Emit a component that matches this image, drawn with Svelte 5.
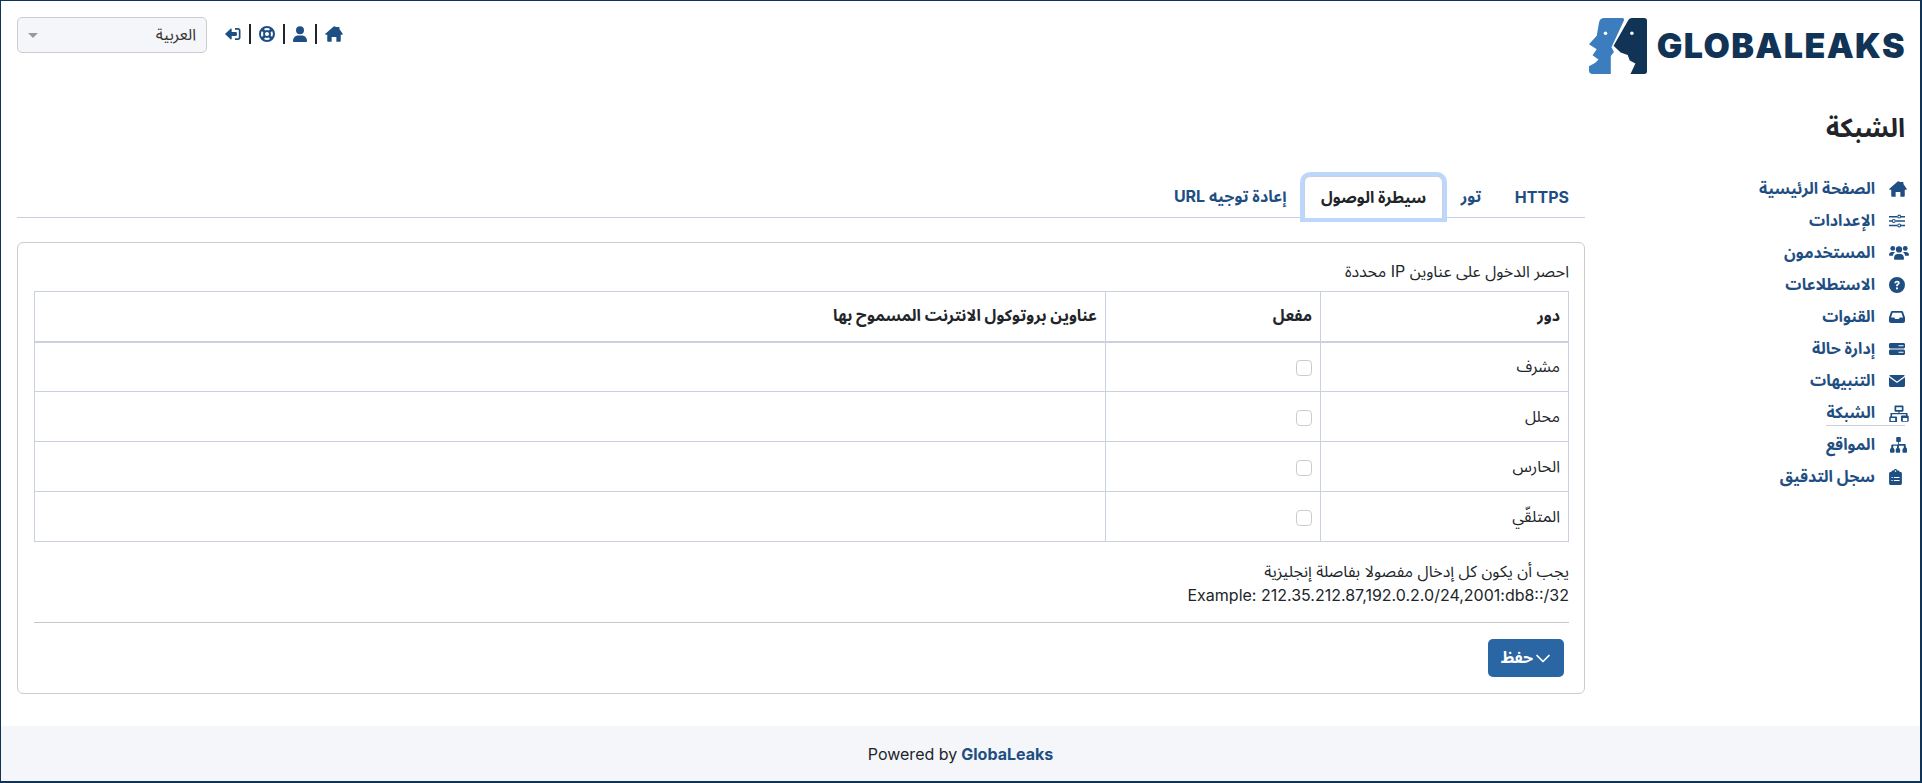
<script>
  const items = [
    { label: "الصفحة الرئيسية", icon: "home" },
    { label: "الإعدادات", icon: "sliders" },
    { label: "المستخدمون", icon: "users" },
    { label: "الاستطلاعات", icon: "question" },
    { label: "القنوات", icon: "inbox" },
    { label: "إدارة حالة", icon: "server" },
    { label: "التنبيهات", icon: "mail" },
    { label: "الشبكة", icon: "network", active: true },
    { label: "المواقع", icon: "sitemap" },
    { label: "سجل التدقيق", icon: "clipboard" }
  ];
  const tabs = ["HTTPS", "تور", "سيطرة الوصول", "إعادة توجيه URL"];
  const roles = ["مشرف", "محلل", "الحارس", "المتلقّي"];
  const activeTab = 2;

  // drawn size and crop of every icon
  const sizes = {
    home: [18, 16, "0 1 16 14.200"],
    sliders: [16, 16, "0 0 16 16"],
    users: [20, 17, "0 1.500 16 13.600"],
    question: [16, 16, "0 0 16 16"],
    inbox: [16, 16, "0 1 16 14"],
    server: [16, 16, "0 1 16 14"],
    mail: [16, 16, "0 1 16 14"],
    network: [20, 17, "0 0 16 14"],
    sitemap: [18, 16, "0 1 16 14.200"],
    clipboard: [13, 16, "1.600 0 12.800 16"]
  };
</script>

{#snippet icon(name)}
  <svg class="ico" width={sizes[name][0]} height={sizes[name][1]} viewBox={sizes[name][2]} fill="currentColor" aria-hidden="true">
    {#if name === "home"}
      <path d="M8 1.200 0.300 7.900c-.3.300-.1.800.3.800H2v5.600c0 .4.300.7.700.7h3.200v-4.200h4.200V15h3.200c.4 0 .7-.3.700-.7V8.700h1.400c.4 0 .6-.5.300-.8L12.800 3.700V1.800h-2v.2z"/>
    {:else if name === "sliders"}
      <path d="M0 2.900h8.400v1.500H0zM12 2.900h4v1.500h-4zM0 7.300h3v1.500H0zM6.600 7.300H16v1.500H6.600zM0 11.700h8.400v1.500H0zM12 11.700h4v1.500h-4z"/>
      <path fill-rule="evenodd" d="M10.200 1.600a2 2 0 1 1 0 4 2 2 0 0 1 0-4zm0 1.100a.9.900 0 1 0 0 1.800.9.900 0 0 0 0-1.800zM4.800 6a2 2 0 1 1 0 4 2 2 0 0 1 0-4zm0 1.100a.9.900 0 1 0 0 1.800.9.900 0 0 0 0-1.800zM10.200 10.400a2 2 0 1 1 0 4 2 2 0 0 1 0-4zm0 1.100a.9.900 0 1 0 0 1.800.9.900 0 0 0 0-1.800z"/>
    {:else if name === "users"}
      <circle cx="3" cy="4.200" r="1.900"/><circle cx="13" cy="4.200" r="1.900"/><circle cx="8" cy="5" r="2.500"/>
      <path d="M0 9.500C0 7.900 1 7 2.400 7h1.200c.4 0 .8.100 1.100.3C3.800 8 3.200 9 3.100 10H.5c-.3 0-.5-.2-.5-.5zM16 9.500C16 7.900 15 7 13.600 7h-1.200c-.4 0-.8.100-1.100.3.900.7 1.500 1.700 1.600 2.700h2.600c.3 0 .5-.2.500-.5zM4 12.500C4 10 5.200 8.600 6.800 8.600h2.400c1.600 0 2.800 1.400 2.800 3.900 0 .5-.3.800-.8.800H4.800c-.5 0-.8-.3-.8-.8z"/>
    {:else if name === "question"}
      <path fill-rule="evenodd" d="M8 0a8 8 0 1 1 0 16A8 8 0 0 1 8 0zM5.400 6.200h1.700c0-.6.400-1 .9-1s.9.300.9.800c0 .4-.3.700-.8 1-.7.500-1 .9-1 1.800v.4h1.700v-.3c0-.5.200-.7.800-1.100.7-.5 1.100-1.100 1.100-1.900C10.700 4.500 9.600 3.700 8 3.700c-1.500 0-2.600.9-2.600 2.500zM8 10.300a1.100 1.100 0 1 0 0 2.200 1.100 1.100 0 0 0 0-2.200z"/>
    {:else if name === "inbox"}
      <path fill-rule="evenodd" d="M3.200 2h9.600c.6 0 1.100.3 1.300.9L16 8.600V12c0 1.100-.9 2-2 2H2c-1.100 0-2-.9-2-2V8.600L1.900 2.900C2.100 2.300 2.600 2 3.200 2zm.4 1.700L2 8.500h3.200l1 1.600h3.600l1-1.600H14l-1.600-4.800z"/>
    {:else if name === "server"}
      <path fill-rule="evenodd" d="M1.500 2h13c.8 0 1.500.7 1.500 1.500v2.400c0 .8-.7 1.500-1.500 1.500h-13C.7 7.400 0 6.700 0 5.900V3.500C0 2.700.7 2 1.500 2zm8 2.200v1h5v-1zM1.500 8.600h13c.8 0 1.500.7 1.500 1.500v2.400c0 .8-.7 1.500-1.500 1.500h-13c-.8 0-1.500-.7-1.500-1.500v-2.400c0-.8.700-1.500 1.500-1.500zm8 2.200v1h5v-1z"/>
    {:else if name === "mail"}
      <path d="M1.500 2h13c.6 0 1 .3 1.300.7L8 8.400.2 2.700C.5 2.300.9 2 1.500 2zM0 4.200l7.700 5.600c.2.100.4.100.6 0L16 4.200v8.300c0 .8-.7 1.500-1.500 1.500h-13C.7 14 0 13.300 0 12.500z"/>
    {:else if name === "network"}
      <path fill-rule="evenodd" d="M5 .5h6c.4 0 .7.300.7.700v3.600c0 .4-.3.700-.7.700H8.500v1h6.500v2.200h.3c.4 0 .7.300.7.700v3.600c0 .4-.3.700-.7.700h-5c-.4 0-.7-.3-.7-.7v-3.600c0-.4.300-.7.700-.7h3.400V7.700h-11.400v1.800h3.400c.4 0 .7.300.7.700v3.600c0 .4-.3.700-.7.700h-5c-.4 0-.7-.3-.7-.7v-3.600c0-.4.300-.7.700-.7h.3V6.500h6.500v-1H5c-.4 0-.7-.3-.7-.7V1.200c0-.4.300-.7.700-.7zm.7 1.300v2.400h4.600V1.800zM1.200 10.800v2.400h3.600v-2.400zm10 0v2.400h3.600v-2.400z"/>
    {:else if name === "sitemap"}
      <path d="M6.200 1h3.600c.4 0 .7.300.7.700v3c0 .4-.3.700-.7.700h-1v1.700h5c.6 0 1.100.5 1.100 1.100v2c.7.300 1.100.9 1.100 1.800V14c0 .5-.4 1-1 1h-2c-.6 0-1-.5-1-1v-1.500c0-.9.400-1.500 1.100-1.800v-2H8.800v2c.7.300 1.100.9 1.100 1.800V14c0 .5-.4 1-1 1H7c-.6 0-1-.5-1-1v-1.500c0-.9.400-1.500 1.100-1.800v-2H3.800v2c.7.300 1.100.9 1.100 1.800V14c0 .5-.4 1-1 1h-2c-.6 0-1-.5-1-1v-1.500c0-.9.400-1.500 1.100-1.800v-2c0-.6.500-1.100 1.100-1.100h5V5.400h-1c-.4 0-.7-.3-.7-.7v-3c0-.4.300-.7.700-.7z"/>
    {:else if name === "clipboard"}
      <path fill-rule="evenodd" d="M8 0c.9 0 1.600.6 1.900 1.400H11c.5 0 1 .4 1 1V3h1c.8 0 1.400.6 1.400 1.400v10.200c0 .8-.6 1.400-1.400 1.400H3c-.8 0-1.400-.6-1.400-1.400V4.400C1.600 3.600 2.200 3 3 3h1v-.6c0-.6.500-1 1-1h1.100C6.400.600 7.100 0 8 0zm0 1.300a.8.800 0 1 0 0 1.600.8.800 0 0 0 0-1.600zM4 8v1h1.200V8zm2.400 0v1h5.600V8zM4 11v1h1.200v-1zm2.400 0v1h5.600v-1z"/>
    {/if}
  </svg>
{/snippet}

<div class="page" dir="rtl">
  <div class="content">
    <header>
      <div class="logo" dir="ltr">
        <svg viewBox="18 18 165 165" width="58" height="56" preserveAspectRatio="none" aria-hidden="true">
          <path fill="#3b7dbf" d="M62 18H112Q120 18 117 26L82 104 89 118 80 130V183H28Q18 183 18 173V160L36 150 45 140 28 128 40 110 18 95 40 70 46 34Q48 18 62 18Z"/>
          <path fill="#113355" d="M130 24Q133 18 140 18H175Q183 18 183 26V175Q183 183 175 183H136L150 152 134 143 128 127 108 120 88 100Z"/>
          <circle cx="65" cy="63" r="5" fill="#fff"/>
          <circle cx="140" cy="63" r="5" fill="#fff"/>
        </svg>
        <span>GLOBALEAKS</span>
      </div>
      <div class="tools">
        <nav class="links">
          <a href="#home">{@render icon("home")}</a>
          <i></i>
          <a href="#me">
            <svg class="ico" width="14" height="16" viewBox="1 0 14 16" fill="currentColor"><circle cx="8" cy="4.200" r="4"/><path d="M2 16c-.6 0-1-.4-1-1 0-3.300 2.500-5.400 5-5.400h4c2.500 0 5 2.100 5 5.400 0 .6-.4 1-1 1z"/></svg>
          </a>
          <i></i>
          <a href="#help">
            <svg class="ico" width="16" height="16" viewBox="0 0 16 16" fill="currentColor"><path fill-rule="evenodd" d="M8 0a8 8 0 1 1 0 16A8 8 0 0 1 8 0zm0 2a6 6 0 0 0-3.100.9l1.500 1.500a3.900 3.900 0 0 1 3.200 0l1.500-1.500A6 6 0 0 0 8 2zM2.900 4.900a6 6 0 0 0 0 6.200l1.500-1.500a3.900 3.900 0 0 1 0-3.200zm10.200 0-1.500 1.500a3.900 3.900 0 0 1 0 3.200l1.500 1.500a6 6 0 0 0 0-6.200zM8 6a2 2 0 1 0 0 4 2 2 0 0 0 0-4zm-1.600 5.600-1.500 1.500a6 6 0 0 0 6.200 0l-1.500-1.500a3.900 3.900 0 0 1-3.200 0z"/></svg>
          </a>
          <i></i>
          <a href="#out">
            <svg class="ico" width="16" height="16" viewBox="0 0 16 16" fill="currentColor"><path d="M10 2h3c1.500 0 2.500 1 2.500 2.500v7c0 1.500-1 2.500-2.500 2.500h-3v-1.700h3c.5 0 .8-.3.800-.8v-7c0-.5-.3-.8-.8-.8h-3z"/><path d="M0 8l5.500-5.200c.5-.5 1.200-.1 1.200.5V6h4.300c.5 0 .9.400.9.900v2.200c0 .5-.4.900-.9.900H6.700v2.700c0 .6-.7 1-1.200.5z"/></svg>
          </a>
        </nav>
        <div class="lang"><span>العربية</span><b></b></div>
      </div>
    </header>

    <div class="body">
      <aside>
        <h1>الشبكة</h1>
        <ul>
          {#each items as it}
            <li class:active={it.active}>
              <span class="slot" dir="ltr">{@render icon(it.icon)}</span>
              <a href="#x">{it.label}</a>
            </li>
          {/each}
        </ul>
      </aside>

      <main>
        <div class="tabs">
          {#each tabs as t, i}
            <button class:on={i === activeTab}>{t}</button>
          {/each}
        </div>
        <section class="card">
          <p class="lead">احصر الدخول على عناوين IP محددة</p>
          <table>
            <thead>
              <tr>
                <th class="c1">دور</th>
                <th class="c2">مفعل</th>
                <th>عناوين بروتوكول الانترنت المسموح بها</th>
              </tr>
            </thead>
            <tbody>
              {#each roles as r}
                <tr>
                  <td>{r}</td>
                  <td><span class="check"></span></td>
                  <td></td>
                </tr>
              {/each}
            </tbody>
          </table>
          <div class="help">
            <div>يجب أن يكون كل إدخال مفصولا بفاصلة إنجليزية</div>
            <div>Example: 212.35.212.87,192.0.2.0/24,2001:db8::/32</div>
          </div>
          <hr />
          <div class="actions">
            <button class="save">
              <svg viewBox="0 0 16 16" width="16" height="16" fill="none" stroke="#fff" stroke-width="1.700" stroke-linecap="round" stroke-linejoin="round"><path d="M2 5.500 8 11.500l6-6"/></svg>
              <span>حفظ</span>
            </button>
          </div>
        </section>
      </main>
    </div>
  </div>

  <footer dir="ltr">Powered by <a href="#gl">GlobaLeaks</a></footer>
</div>

<style>
  :global(body) {
    margin: 0;
    background: #fff;
  }

  .page {
    box-sizing: border-box;
    height: 783px;
    border-style: solid;
    border-color: #113355;
    border-width: 1px 2px 2px 1px;
    display: flex;
    flex-direction: column;
    font-family: Inter, "Noto Sans Arabic", "Noto Sans", "DejaVu Sans", sans-serif;
    font-size: 16px;
    color: #212529;
    overflow: hidden;
  }

  .content {
    flex: 1;
    padding: 16px 15px 0 16px;
  }

  header {
    display: flex;
    justify-content: space-between;
    align-items: flex-start;
    height: 64px;
  }

  .logo {
    display: flex;
    align-items: center;
    gap: 10px;
    height: 57px;
    color: #113355;
  }

  .logo span {
    font-family: Inter, sans-serif;
    font-weight: 900;
    font-size: 34px;
    letter-spacing: 1.400px;
    margin-right: -1px;
    line-height: 1;
  }

  .tools {
    display: flex;
    align-items: flex-start;
    gap: 18px;
  }

  .links {
    display: flex;
    align-items: center;
    gap: 8px;
    height: 24px;
    margin-top: 5px;
    color: #1f4f82;
  }

  .links a {
    color: inherit;
    display: flex;
  }

  .links i {
    width: 2px;
    height: 20px;
    background: #212529;
  }

  .ico {
    display: block;
    flex: none;
  }

  .lang {
    box-sizing: border-box;
    width: 190px;
    height: 36px;
    border: 1px solid #ccc;
    border-radius: 5px;
    background: #f5f6fa;
    display: flex;
    align-items: center;
    justify-content: space-between;
    padding: 0 10px;
    color: #333;
  }

  .lang b {
    width: 0;
    height: 0;
    border: 5px solid transparent;
    border-top: 5px solid #999;
    border-bottom: 0;
  }

  .body {
    display: flex;
    align-items: flex-start;
  }

  aside {
    width: 320px;
    flex: none;
  }

  h1 {
    margin: 32px 0 34px;
    font-size: 26px;
    font-weight: 700;
    line-height: 30px;
  }

  ul {
    list-style: none;
    margin: 0;
    padding: 0;
  }

  li {
    display: flex;
    width: fit-content;
    align-items: center;
    height: 24px;
    margin-bottom: 7px;
    border-bottom: 1px solid transparent;
    color: #1f4f82;
    font-weight: 700;
    font-size: 16px;
  }

  li.active {
    border-bottom-color: #c9d0de;
  }

  li a {
    color: inherit;
    text-decoration: none;
  }

  .slot {
    width: 16px;
    margin-left: 14px;
    display: flex;
  }

  main {
    flex: 1;
    min-width: 0;
  }

  .tabs {
    display: flex;
    gap: 1.500px;
    margin-top: 95px;
    height: 42px;
    box-sizing: border-box;
    border-bottom: 1px solid #c9d0de;
  }

  .tabs button {
    appearance: none;
    background: none;
    border: 0;
    padding: 0 16px;
    height: 41px;
    font: inherit;
    font-weight: 700;
    color: #1f4f82;
  }

  .tabs button.on {
    color: #212529;
    background: #fff;
    height: 42px;
    border: 1px solid #c9d0de;
    border-bottom: 0;
    border-radius: 6px 6px 0 0;
    box-shadow: 0 0 0 4px #bcd7fb;
    box-sizing: border-box;
  }

  .card {
    box-sizing: border-box;
    margin-top: 24px;
    height: 452px;
    border: 1px solid #ccc;
    border-radius: 6px;
    padding: 16px 15px 16px 16px;
  }

  .lead {
    margin: 0;
    height: 32px;
    line-height: 24px;
  }

  table {
    width: 100%;
    border-collapse: collapse;
    table-layout: fixed;
  }

  th,
  td {
    border: 1px solid #c9d0de;
    padding: 0 8px;
    height: 50px;
    text-align: right;
    box-sizing: border-box;
  }

  thead th {
    border-bottom-width: 2px;
    font-weight: 700;
  }

  .c1 {
    width: 248px;
  }

  .c2 {
    width: 215px;
  }

  .check {
    display: inline-block;
    width: 16px;
    height: 16px;
    border: 1px solid #ccc;
    border-radius: 4px;
    box-sizing: border-box;
    vertical-align: middle;
  }

  .help {
    margin-top: 17px;
    line-height: 24px;
  }

  hr {
    margin: 15px 0 16px;
    border: 0;
    border-top: 1px solid #c4c8d0;
  }

  .actions {
    display: flex;
    padding-right: 5px;
  }

  .save {
    appearance: none;
    border: 0;
    width: 76px;
    height: 38px;
    border-radius: 5px;
    background: #2a66a3;
    color: #fff;
    font: inherit;
    font-weight: 700;
    display: flex;
    align-items: center;
    justify-content: center;
    gap: 2px;
  }

  footer {
    height: 55px;
    flex: none;
    background: #f5f6fa;
    display: flex;
    align-items: center;
    justify-content: center;
    gap: 4px;
  }

  footer a {
    color: #1f4f82;
    font-weight: 700;
    text-decoration: none;
  }
</style>
